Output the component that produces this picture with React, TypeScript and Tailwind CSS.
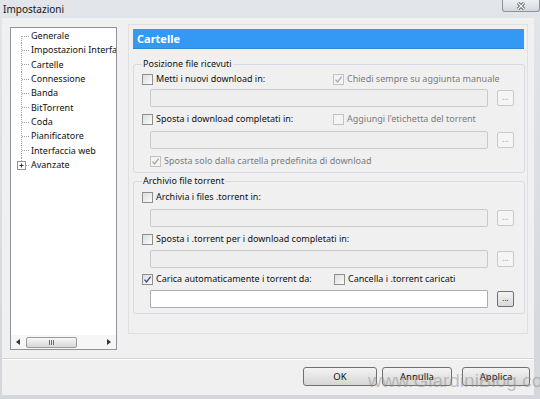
import React from "react";

function Check({ checked, disabled }: { checked?: boolean; disabled?: boolean }) {
  return (
    <span
      className={
        disabled
          ? "w-[11px] h-[11px] shrink-0 border border-[#c2c2c2] bg-[#f4f4f4] flex items-center justify-center"
          : "w-[11px] h-[11px] shrink-0 border border-[#8e8f8f] bg-gradient-to-br from-[#dedede] to-[#fafafa] flex items-center justify-center"
      }
    >
      {checked && (
        <svg width="9" height="9" viewBox="0 0 9 9">
          <path
            d="M1.5 4.6 L3.6 6.9 L7.6 1.6"
            fill="none"
            stroke={disabled ? "#a8a8a8" : "#3b4f86"}
            strokeWidth="1.4"
          />
        </svg>
      )}
    </span>
  );
}

function CheckLabel({
  text,
  checked,
  disabled,
}: {
  text: string;
  checked?: boolean;
  disabled?: boolean;
}) {
  return (
    <div className="flex items-center gap-[3px] whitespace-nowrap">
      <Check checked={checked} disabled={disabled} />
      <span className={disabled ? "text-[#7c7c7c]" : "text-[#111]"}>{text}</span>
    </div>
  );
}

function PathRow({ enabled }: { enabled?: boolean }) {
  return (
    <div className="flex items-center ml-[8px] gap-[9px]">
      <div
        className={
          enabled
            ? "w-[338px] h-[18px] border border-[#abadb3] bg-white rounded-[1px]"
            : "w-[338px] h-[18px] border border-[#cacaca] bg-[#eeeeee] rounded-[2px]"
        }
      />
      <div
        className={
          enabled
            ? "w-[17px] h-[16px] border border-[#707070] rounded-[2px] bg-gradient-to-b from-[#f4f4f4] to-[#d8d8d8] flex items-center justify-center text-[8px] leading-none text-[#222] pb-[2px]"
            : "w-[17px] h-[16px] border border-[#c9c9c9] rounded-[2px] bg-[#f5f5f5] flex items-center justify-center text-[8px] leading-none text-[#9a9a9a] pb-[2px]"
        }
      >
        ...
      </div>
    </div>
  );
}

const treeItems = [
  "Generale",
  "Impostazioni Interfaccia",
  "Cartelle",
  "Connessione",
  "Banda",
  "BitTorrent",
  "Coda",
  "Pianificatore",
  "Interfaccia web",
  "Avanzate",
];

function TreeConnector({ index, last }: { index: number; last: boolean }) {
  return (
    <svg width="20" height="15" viewBox="0 0 20 15" className="shrink-0 overflow-visible">
      {!last && (
        <line
          x1="10.5"
          y1={index === 0 ? 7 : 0}
          x2="10.5"
          y2="15"
          stroke="#a3a3a3"
          strokeDasharray="1 1"
        />
      )}
      {last ? (
        <>
          <line x1="10.5" y1="0" x2="10.5" y2="3" stroke="#a3a3a3" strokeDasharray="1 1" />
          <rect x="6.5" y="3.5" width="8" height="8" fill="#fff" stroke="#939393" />
          <line x1="8.5" y1="7.5" x2="12.5" y2="7.5" stroke="#333" />
          <line x1="10.5" y1="5.5" x2="10.5" y2="9.5" stroke="#333" />
          <line x1="15" y1="7.5" x2="19" y2="7.5" stroke="#a3a3a3" strokeDasharray="1 1" />
        </>
      ) : (
        <line x1="11" y1="7.5" x2="19" y2="7.5" stroke="#a3a3a3" strokeDasharray="1 1" />
      )}
    </svg>
  );
}

export default function App() {
  return (
    <div className="w-[540px] h-[399px] overflow-hidden relative bg-gradient-to-b from-[#e2e5e9] to-[#d3d7dc] font-['Noto_Sans',sans-serif] text-black flex flex-col">
      {/* title bar */}
      <div className="h-[18px] shrink-0 flex items-start justify-between">
        <span className="text-[10px] leading-[18px] pl-[3px] text-[#151515]">Impostazioni</span>
        <div className="w-[38px] h-[12px] border border-t-0 border-[#8d939b] rounded-b-[3px] bg-gradient-to-b from-[#eef0f2] to-[#d3d7dc] flex items-center justify-center">
          <svg width="10" height="8" viewBox="0 0 10 8">
            <path d="M2 1 L8 7 M8 1 L2 7" stroke="#4e4e4e" strokeWidth="3" />
            <path d="M2 1 L8 7 M8 1 L2 7" stroke="#ffffff" strokeWidth="1.4" />
          </svg>
        </div>
      </div>

      {/* client area */}
      <div className="flex-1 ml-[2px] mr-[6px] mb-[4px] bg-[#f0f0f0] flex flex-col text-[9px] leading-[12px]">
        <div className="flex items-start pt-[6px] pl-[8px]">
          {/* tree */}
          <div className="mt-[3px] w-[107px] h-[323px] border border-[#8f9399] bg-white flex flex-col overflow-hidden">
            <div className="flex-1 pt-[1px] overflow-hidden">
              {treeItems.map((t, i) => (
                <div key={t} className="h-[14.33px] flex items-center whitespace-nowrap">
                  <TreeConnector index={i} last={i === treeItems.length - 1} />
                  <span className="text-[#111]">{t}</span>
                </div>
              ))}
            </div>
            {/* horizontal scrollbar */}
            <div className="h-[14px] bg-[#f6f6f6] flex items-center">
              <div className="w-[14px] h-full flex items-center justify-center">
                <svg width="4" height="6" viewBox="0 0 4 6">
                  <path d="M4 0 L0 3 L4 6 Z" fill="#333" />
                </svg>
              </div>
              <div className="ml-[1px] w-[51px] h-[11px] border border-[#9c9c9c] rounded-[2px] bg-gradient-to-b from-[#f7f7f7] to-[#d7d7d7] flex items-center justify-center">
                <svg width="5" height="5" viewBox="0 0 5 5">
                  <path d="M0.5 0 V5 M2.5 0 V5 M4.5 0 V5" stroke="#6e6e6e" strokeWidth="1" />
                </svg>
              </div>
              <div className="flex-1" />
              <div className="w-[14px] h-full flex items-center justify-center">
                <svg width="4" height="6" viewBox="0 0 4 6">
                  <path d="M0 0 L4 3 L0 6 Z" fill="#333" />
                </svg>
              </div>
            </div>
          </div>

          {/* right panel */}
          <div className="ml-[11px] w-[400px] h-[310px] border border-[#e0e0e0] pt-[4px] pl-[4px] pr-[2px] flex flex-col">
            <div className="h-[20px] mr-[1px] bg-[#3399f5] border-b border-[#2d86d8] text-white font-bold text-[11px] leading-[20px] pl-[4px]">
              Cartelle
            </div>

            <fieldset className="mt-[9px] border border-[#d5dbe0] rounded-[3px] px-[8px] pb-[3px]">
              <legend className="px-[1px] h-[12px] leading-[12px] text-[#111]">Posizione file ricevuti</legend>
              <div className="mt-[1px] h-[16px] flex items-center">
                <div className="w-[191px]">
                  <CheckLabel text="Metti i nuovi download in:" />
                </div>
                <CheckLabel text="Chiedi sempre su aggiunta manuale" checked disabled />
              </div>
              <div className="mt-[2px]">
                <PathRow />
              </div>
              <div className="mt-[4px] h-[16px] flex items-center">
                <div className="w-[191px]">
                  <CheckLabel text="Sposta i download completati in:" />
                </div>
                <CheckLabel text="Aggiungi l'etichetta del torrent" disabled />
              </div>
              <div className="mt-[4px]">
                <PathRow />
              </div>
              <div className="mt-[4px] h-[16px] flex items-center ml-[8px]">
                <CheckLabel text="Sposta solo dalla cartella predefinita di download" checked disabled />
              </div>
            </fieldset>

            <fieldset className="mt-[2px] border border-[#d5dbe0] rounded-[3px] px-[8px] pb-[5px]">
              <legend className="px-[1px] h-[12px] leading-[12px] text-[#111]">Archivio file torrent</legend>
              <div className="mt-[2px] h-[16px] flex items-center">
                <CheckLabel text="Archivia i files .torrent in:" />
              </div>
              <div className="mt-[4px]">
                <PathRow />
              </div>
              <div className="mt-[4px] h-[16px] flex items-center">
                <CheckLabel text="Sposta i .torrent per i download completati in:" />
              </div>
              <div className="mt-[3px]">
                <PathRow />
              </div>
              <div className="mt-[3px] h-[16px] flex items-center">
                <div className="w-[192px]">
                  <CheckLabel text="Carica automaticamente i torrent da:" checked />
                </div>
                <CheckLabel text="Cancella i .torrent caricati" />
              </div>
              <div className="mt-[3px]">
                <PathRow enabled />
              </div>
            </fieldset>
          </div>
        </div>

        {/* separator */}
        <div className="mt-[8px] h-[2px] border-t border-b border-t-[#d3d3d3] border-b-[#ffffff]" />

        {/* buttons */}
        <div className="mt-[7px] flex justify-end pr-[4px] text-[9.5px]">
          <div className="w-[74px] h-[19px] border border-[#707070] rounded-[3px] bg-gradient-to-b from-[#f3f3f3] to-[#d6d6d6] flex items-center justify-center text-[#111]">
            OK
          </div>
          <div className="ml-[5px] w-[70px] h-[19px] border border-[#707070] rounded-[3px] bg-gradient-to-b from-[#f3f3f3] to-[#d6d6d6] flex items-center justify-center text-[#111]">
            Annulla
          </div>
          <div className="ml-[10px] w-[68px] h-[19px] border border-[#707070] rounded-[3px] bg-gradient-to-b from-[#f3f3f3] to-[#d6d6d6] flex items-center justify-center text-[#111]">
            Applica
          </div>
        </div>
      </div>

      {/* watermark */}
      <div className="absolute left-[368px] top-[371px] text-[19px] leading-[20px] font-['Liberation_Sans',sans-serif] text-[#8c8c8c]/50 whitespace-nowrap pointer-events-none">
        www.GiardiniBlog.com
      </div>
    </div>
  );
}
